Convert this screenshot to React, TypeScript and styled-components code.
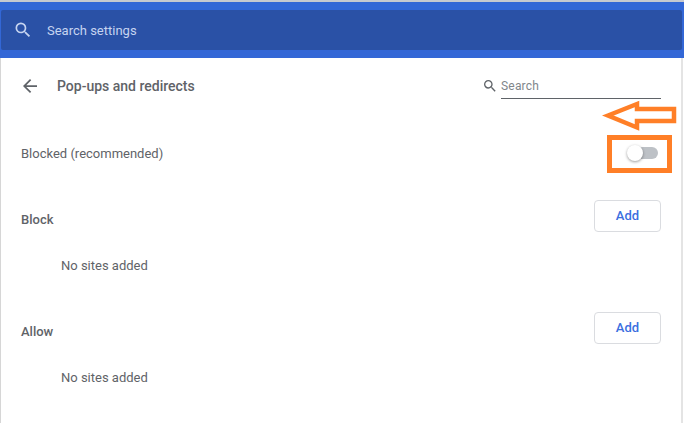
import React, { FC } from 'react';
import styled, { createGlobalStyle } from 'styled-components';

const GlobalStyle = createGlobalStyle`
  html, body {
    margin: 0;
    padding: 0;
    background: #fff;
    overflow: hidden;
  }
  * {
    box-sizing: border-box;
  }
`;

const SearchIcon: FC<{ size: number; color: string }> = ({ size, color }) => (
  <svg width={size} height={size} viewBox="0 0 24 24" fill={color}>
    <path d="M15.5 14h-.79l-.28-.27A6.47 6.47 0 0 0 16 9.5 6.5 6.5 0 1 0 9.5 16c1.61 0 3.09-.59 4.23-1.57l.27.28v.79l5 4.99L20.49 19l-4.99-5zm-6 0C7.01 14 5 11.99 5 9.5S7.01 5 9.5 5 14 7.01 14 9.5 11.99 14 9.5 14z" />
  </svg>
);

const BackIcon: FC = () => (
  <svg width="14" height="14" viewBox="0 0 16 16" fill="#5f6368">
    <path d="M16 7H3.8l5.6-5.6L8 0 0 8l8 8 1.4-1.4L3.8 9H16z" />
  </svg>
);

const sections: string[] = ['Block', 'Allow'];

export default function App() {
  return (
    <Page>
      <GlobalStyle />
      <Header>
        <SearchBar>
          <SearchIcon size={20} color="#c6d4f0" />
          <SearchLabel>Search settings</SearchLabel>
        </SearchBar>
      </Header>
      <Card>
        <TitleRow>
          <BackIcon />
          <Title>Pop-ups and redirects</Title>
          <SiteSearch>
            <SearchIcon size={16} color="#5f6368" />
            <SiteSearchField>Search</SiteSearchField>
          </SiteSearch>
        </TitleRow>
        <ToggleRow>
          <Label>Blocked (recommended)</Label>
          <Track>
            <Knob />
          </Track>
        </ToggleRow>
        {sections.map((name) => (
          <Section key={name}>
            <SectionHead>
              <SectionName>{name}</SectionName>
              <AddButton>Add</AddButton>
            </SectionHead>
            <Empty>No sites added</Empty>
          </Section>
        ))}
      </Card>
      <ArrowMark width="80" height="38" viewBox="0 0 80 38">
        <path
          d="M8 16.5 L37 5 L37 10 L74 10 L74 22 L37 22 L37 28.5 Z"
          fill="none"
          stroke="#ff7f27"
          strokeWidth="4.5"
        />
      </ArrowMark>
      <BoxMark />
    </Page>
  );
}

const Page = styled.div`
  position: relative;
  width: 684px;
  height: 423px;
  overflow: hidden;
  font-family: Roboto, 'Liberation Sans', sans-serif;
  font-size: 13px;
  color: #5f6368;
  background: #fff;
`;

const Header = styled.div`
  height: 58px;
  padding: 8px 2px 8px 1px;
  background: #3367d6;
  border-top: 2px solid #c6c9d0;
`;

const SearchBar = styled.div`
  display: flex;
  align-items: center;
  height: 40px;
  padding-left: 12px;
  border-radius: 2px;
  background: #2a51a6;
`;

const SearchLabel = styled.span`
  margin-left: 14px;
  color: #c6d4f0;
  font-size: 13px;
`;

const Card = styled.div`
  height: 365px;
  border-left: 1px solid #d6d6d6;
  border-right: 2px solid #e4e4e4;
  margin-right: 1px;
`;

const TitleRow = styled.div`
  display: flex;
  align-items: center;
  height: 56px;
  padding: 0 20px 0 22px;
`;

const Title = styled.h1`
  margin: 0 0 0 20px;
  color: #5f6368;
  font-size: 14px;
  font-weight: 500;
`;

const SiteSearch = styled.div`
  display: flex;
  align-items: flex-start;
  margin-left: auto;
  height: 26px;
  padding-top: 5px;
`;

const SiteSearchField = styled.div`
  width: 160px;
  height: 21px;
  margin-left: 3px;
  padding-top: 1px;
  border-bottom: 1px solid #5f6368;
  color: #80868b;
  font-size: 12px;
  letter-spacing: 0.2px;
`;

const ToggleRow = styled.div`
  display: flex;
  align-items: center;
  justify-content: space-between;
  height: 78px;
  padding: 0 23px 0 20px;
`;

const Label = styled.span`
  color: #5f6368;
  font-size: 13px;
`;

const Track = styled.div`
  position: relative;
  width: 28px;
  height: 12px;
  border-radius: 6px;
  background: #bdc1c6;
`;

const Knob = styled.div`
  position: absolute;
  top: -2px;
  left: -3px;
  width: 16px;
  height: 16px;
  border-radius: 50%;
  background: #fff;
  box-shadow: 0 1px 3px rgba(0, 0, 0, 0.4);
`;

const Section = styled.section`
  height: 112px;
  padding: 8px 20px 0;
`;

const SectionHead = styled.div`
  display: flex;
  align-items: center;
  justify-content: space-between;
  height: 32px;
`;

const SectionName = styled.h2`
  margin: 6px 0 0;
  color: #5f6368;
  font-size: 13px;
  font-weight: 500;
`;

const AddButton = styled.button`
  width: 67px;
  height: 32px;
  padding: 0 0 2px;
  border: 1px solid #dadce0;
  border-radius: 4px;
  background: #fff;
  color: #3b6fe0;
  font-family: inherit;
  font-size: 13px;
  font-weight: 500;
`;

const Empty = styled.div`
  margin: 26px 0 0 40px;
  color: #5f6368;
  font-size: 13px;
`;

const ArrowMark = styled.svg`
  position: absolute;
  top: 99px;
  left: 600px;
`;

const BoxMark = styled.div`
  position: absolute;
  top: 135px;
  left: 607px;
  width: 65px;
  height: 38px;
  border: 5px solid #ff7f27;
`;
